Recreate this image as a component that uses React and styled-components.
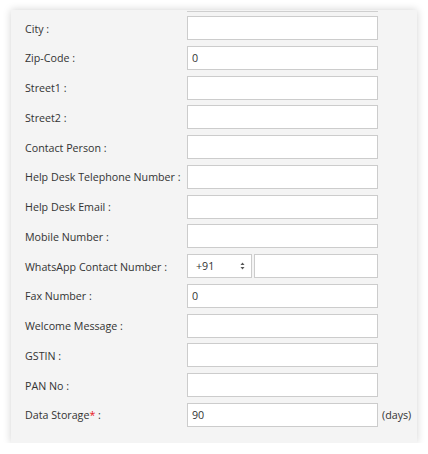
import React from "react"
import styled, { createGlobalStyle } from "styled-components"

const GlobalStyle = createGlobalStyle`
  body {
    margin: 0;
    background: #fff;
    font-family: "Open Sans", "Liberation Sans", sans-serif;
  }
`

const Page = styled.div`
  padding: 10px 11px 0 11px;
  width: 406px;
`

const Panel = styled.div`
  background: #f4f4f4;
  box-shadow: 0 0 8px rgba(0, 0, 0, 0.18);
  padding: 0 0 16px 14px;
`

// bottom edge of the field scrolled out above City
const CutEdge = styled.div`
  margin-left: 162px;
  width: 191px;
  height: 1px;
  border-bottom: 1px solid #cfcfcf;
  margin-bottom: 4px;
`

const Row = styled.div`
  display: flex;
  align-items: center;
  height: 24px;
  margin-bottom: 5.77px;
  &:last-child {
    margin-bottom: 0;
  }
`

const Label = styled.label`
  width: 162px;
  flex-shrink: 0;
  padding-top: 1px;
  font-size: 10.7px;
  color: #333;
`

const Req = styled.span`
  color: #e8141a;
`

const Input = styled.input`
  box-sizing: border-box;
  width: ${(p) => p.w || 191}px;
  height: 24px;
  border: 1px solid #ccc;
  background: #fff;
  padding: 0 4px;
  font-family: "Open Sans", "Liberation Sans", sans-serif;
  font-size: 10.7px;
  color: #333;
  outline: none;
  margin: 0;
`

const SelectBox = styled.div`
  box-sizing: border-box;
  width: 65px;
  height: 24px;
  border: 1px solid #ccc;
  background: #fff;
  display: flex;
  align-items: center;
  justify-content: space-between;
  padding: 0 6px 0 8px;
  margin-right: 2px;
  font-size: 10.7px;
  color: #333;
`

const Unit = styled.span`
  margin-left: 4px;
  font-size: 10.7px;
  color: #333;
`

const Arrows = () => (
  <svg width="5" height="8" viewBox="0 0 5 8">
    <path d="M2.5 0.5 L4.5 3 H0.5 Z" fill="#555" />
    <path d="M2.5 7.5 L4.5 5 H0.5 Z" fill="#555" />
  </svg>
)

const fields = [
  { label: "City :", value: "" },
  { label: "Zip-Code :", value: "0" },
  { label: "Street1 :", value: "" },
  { label: "Street2 :", value: "" },
  { label: "Contact Person :", value: "" },
  { label: "Help Desk Telephone Number :", value: "" },
  { label: "Help Desk Email :", value: "" },
  { label: "Mobile Number :", value: "" },
  { label: "WhatsApp Contact Number :", phone: true },
  { label: "Fax Number :", value: "0" },
  { label: "Welcome Message :", value: "" },
  { label: "GSTIN :", value: "" },
  { label: "PAN No :", value: "" },
]

export default function App() {
  return (
    <Page>
      <GlobalStyle />
      <Panel>
        <CutEdge />
        {fields.map((f) => (
          <Row key={f.label}>
            <Label>{f.label}</Label>
            {f.phone ? (
              <>
                <SelectBox>
                  +91
                  <Arrows />
                </SelectBox>
                <Input w={124} defaultValue="" />
              </>
            ) : (
              <Input defaultValue={f.value} />
            )}
          </Row>
        ))}
        <Row>
          <Label>
            Data Storage<Req>*</Req> :
          </Label>
          <Input defaultValue="90" />
          <Unit>(days)</Unit>
        </Row>
      </Panel>
    </Page>
  )
}
